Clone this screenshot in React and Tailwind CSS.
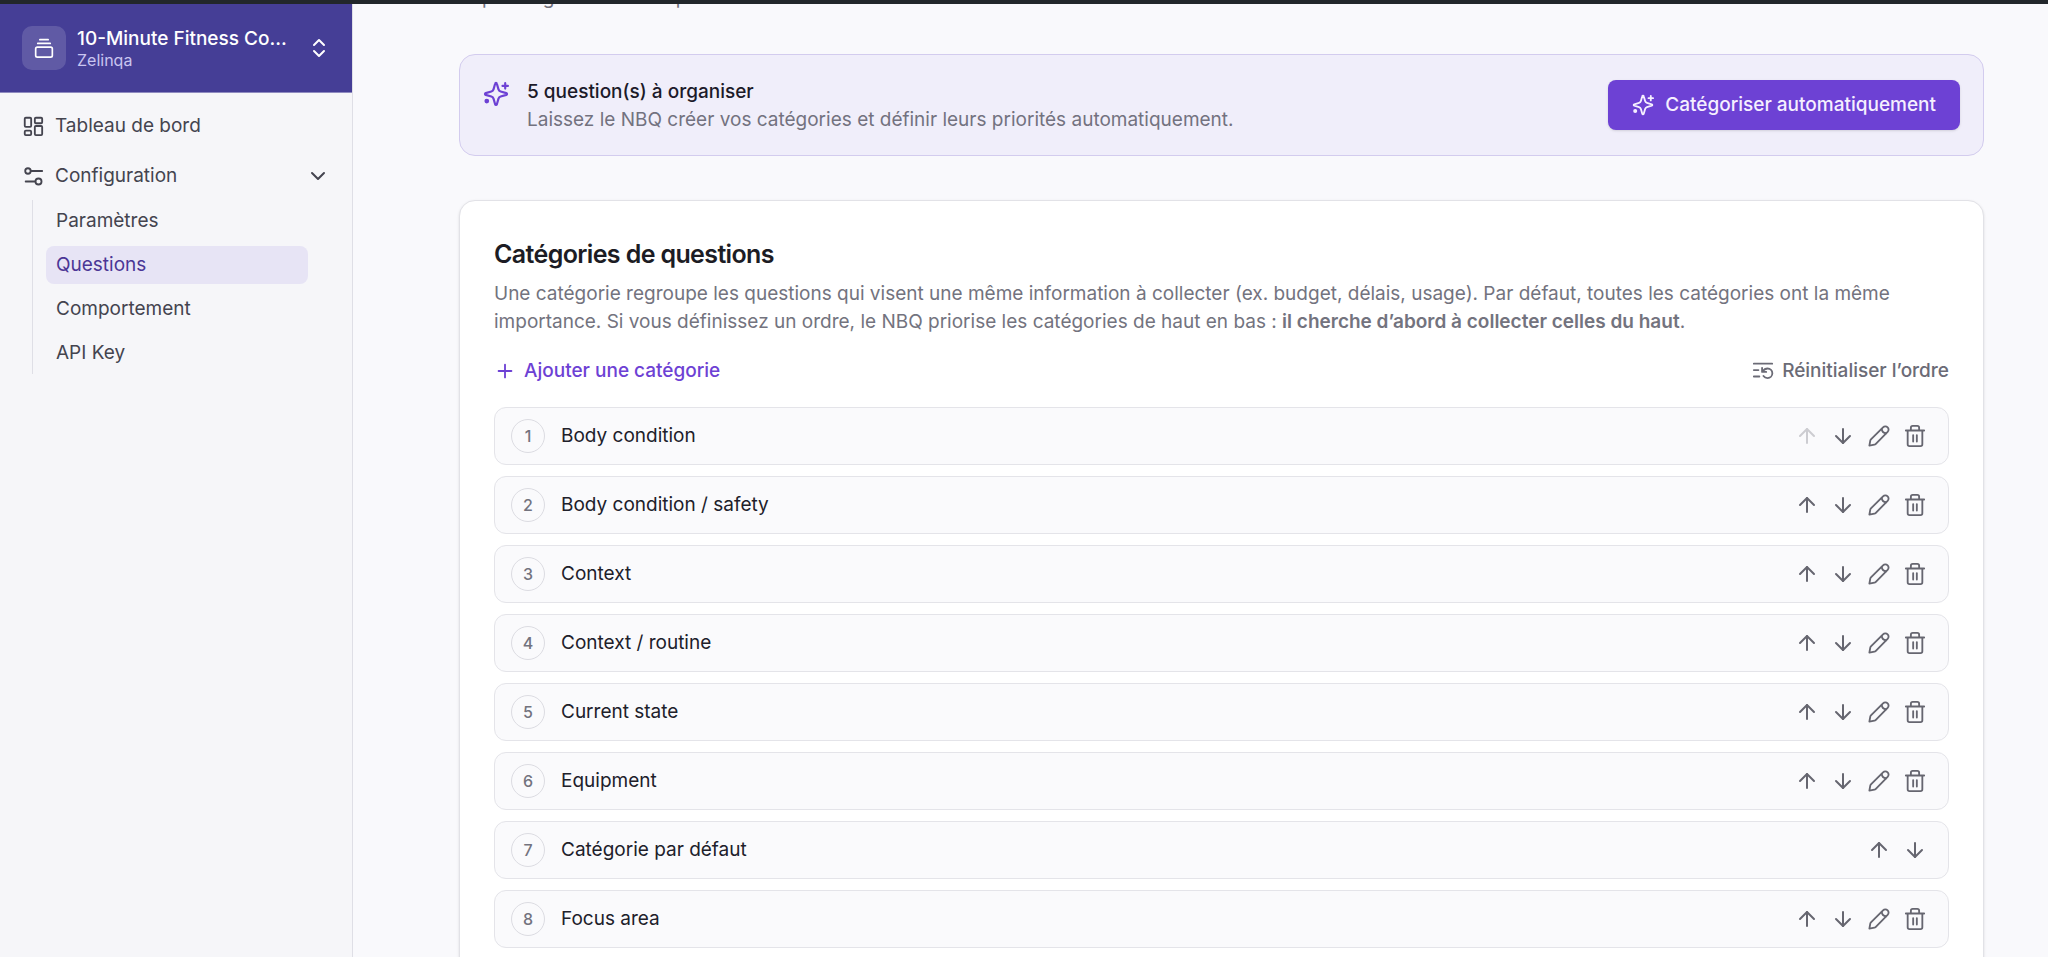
import { Plus, ArrowUp, ArrowDown, ChevronDown, ChevronsUpDown } from "lucide-react";

function Icon({ className, children, strokeWidth = 1.5 }) {
  return (
    <svg viewBox="0 0 24 24" fill="none" stroke="currentColor" strokeWidth={strokeWidth} strokeLinecap="round" strokeLinejoin="round" className={className} aria-hidden="true">
      {children}
    </svg>
  );
}

function StackIcon({ className }) {
  return (
    <Icon className={className} strokeWidth={2}>
      <rect x="2" y="11" width="20" height="12" rx="2" />
      <path d="M4.5 6.5h15M7 2h10" />
    </Icon>
  );
}

function DashboardIcon({ className }) {
  return (
    <Icon className={className} strokeWidth={2}>
      <rect x="3" y="3" width="7" height="10" rx="1.2" />
      <rect x="14" y="3" width="8" height="6" rx="1.2" />
      <rect x="3" y="17" width="7" height="5" rx="1.2" />
      <rect x="14" y="12" width="8" height="10" rx="1.2" />
    </Icon>
  );
}

function SlidersIcon({ className }) {
  return (
    <Icon className={className} strokeWidth={2}>
      <circle cx="6.5" cy="6.5" r="3" />
      <path d="M9.5 6.5h12.5M4 18h10.5" />
      <circle cx="18" cy="18" r="3.3" />
    </Icon>
  );
}

function SparklesIcon({ className }) {
  return (
    <Icon className={className} strokeWidth={2}>
      <path d="M12 1.8c.5 0 .7.3.8.7l1.5 5.2c.3 1 1 1.700 2 2l5.200 1.500c.9.3.9 1.300 0 1.600l-5.200 1.500c-1 .3-1.700 1-2 2l-1.500 5.200c-.3.9-1.300.9-1.600 0l-1.500-5.200c-.3-1-1-1.700-2-2l-5.200-1.500c-.9-.3-.9-1.300 0-1.600l5.200-1.500c1-.3 1.700-1 2-2l1.500-5.200c.1-.4.3-.7.800-.7z" />
      <path d="M20.5 2v5M18 4.500h5" />
      <circle cx="3.5" cy="18.5" r="1.2" fill="currentColor" />
    </Icon>
  );
}

function PencilIcon({ className }) {
  return (
    <Icon className={className} strokeWidth={2}>
      <path d="M1.5 22.500l1-5.500c.1-.5.3-.9.7-1.300L16.400 2.500a3.500 3.500 0 0 1 5 0 3.500 3.500 0 0 1 0 5L8.300 20.800c-.4.4-.8.6-1.300.7z" />
      <path d="M15 4.200c.2 3 1.800 4.600 4.800 4.800" />
    </Icon>
  );
}

function TrashIcon({ className }) {
  return (
    <Icon className={className} strokeWidth={2}>
      <path d="M2 6h20M4 6v15A2 2 0 0 0 6 23h12a2 2 0 0 0 2-2V6M7.5 6V3a2 2 0 0 1 2-2h5a2 2 0 0 1 2 2V6M10 11v7M14 11v7" />
    </Icon>
  );
}

function ResetOrderIcon({ className }) {
  return (
    <Icon className={className} strokeWidth={2}>
      <path d="M2 4h20M2 11h5M2 18h6" />
      <path d="M11 8.500v4.500h4.500M11.500 12.500c1.500-2.200 3.500-3.200 5.500-3.200a5.200 5.200 0 0 1 0 10.400c-2 0-3.500-.8-4.500-2.200" />
    </Icon>
  );
}

const subItems = [
  { label: "Paramètres" },
  { label: "Questions", active: true },
  { label: "Comportement" },
  { label: "API Key" },
];

const categories = [
  { name: "Body condition", first: true },
  { name: "Body condition / safety" },
  { name: "Context" },
  { name: "Context / routine" },
  { name: "Current state" },
  { name: "Equipment" },
  { name: "Catégorie par défaut", locked: true },
  { name: "Focus area" },
];

function IconButton({ label, disabled, children }) {
  return (
    <button type="button" aria-label={label} disabled={disabled} className="flex size-8 items-center justify-center rounded-md disabled:opacity-30">
      {children}
    </button>
  );
}

function Sidebar() {
  return (
    <aside className="flex w-[353px] shrink-0 flex-col border-r border-[#dfdfe6] bg-[#f6f6f9]">
      <button type="button" className="flex h-[89px] items-center gap-[11px] border-b border-[#8f8bc0] bg-[#453e96] pr-[21px] pl-[22px] text-left text-white">
        <span className="flex size-11 shrink-0 items-center justify-center rounded-[10px] bg-white/15">
          <StackIcon className="size-5" />
        </span>
        <span className="flex min-w-0 flex-1 flex-col pt-[2px]">
          <span className="truncate text-[19px] leading-[22px] font-medium">10-Minute Fitness Coach</span>
          <span className="text-[16px] leading-5 text-[#c9c5f0]">Zelinqa</span>
        </span>
        <ChevronsUpDown className="size-6 shrink-0" strokeWidth={2} aria-hidden="true" />
      </button>
      <nav className="flex flex-col px-[22px] pt-[9px] text-[19px] text-[#44444f]">
        <a href="#tableau" className="flex h-12 items-center gap-[11px]">
          <DashboardIcon className="size-[22px]" />
          Tableau de bord
        </a>
        <button type="button" aria-expanded="true" className="mt-0.5 flex h-12 items-center gap-[11px]">
          <SlidersIcon className="size-[22px]" />
          <span className="flex-1 text-left">Configuration</span>
          <ChevronDown className="size-6" strokeWidth={2} aria-hidden="true" />
        </button>
        <ul className="ml-[10px] flex flex-col gap-[6px] border-l border-[#dfdfe6] py-[2px] pr-[22px] pl-[13px]">
          {subItems.map((item) => (
            <li key={item.label}>
              <a
                href="#section"
                aria-current={item.active ? "page" : undefined}
                className={item.active ? "flex h-[38px] items-center rounded-lg bg-[#e7e4f5] px-[10px] text-[#4b3696]" : "flex h-[38px] items-center rounded-lg px-[10px]"}
              >
                {item.label}
              </a>
            </li>
          ))}
        </ul>
      </nav>
    </aside>
  );
}

function CategoryRow({ index, category }) {
  return (
    <li className="flex h-[58px] items-center gap-4 rounded-xl border border-[#e4e4e9] bg-[#fafafc] pr-[17px] pl-4">
      <span className="flex size-[34px] items-center justify-center rounded-full border border-[#dcdce2] text-[16px] font-medium text-[#73737e]">{index}</span>
      <span className="flex-1 text-[19px] text-[#20202a]">{category.name}</span>
      <div className="flex items-center gap-1 text-[#666670]">
        <IconButton label="Monter" disabled={category.first}>
          <ArrowUp className="size-6" strokeWidth={2} />
        </IconButton>
        <IconButton label="Descendre">
          <ArrowDown className="size-6" strokeWidth={2} />
        </IconButton>
        {!category.locked && (
          <>
            <IconButton label="Modifier">
              <PencilIcon className="size-[22px]" />
            </IconButton>
            <IconButton label="Supprimer">
              <TrashIcon className="size-[22px]" />
            </IconButton>
          </>
        )}
      </div>
    </li>
  );
}

export default function App() {
  return (
    <div className="flex h-screen flex-col overflow-hidden border-t-4 border-[#22272b] bg-[#f9f9fc] font-['Inter',sans-serif]">
      <div className="flex min-h-0 flex-1">
        <Sidebar />
        <main className="flex min-w-0 flex-1 flex-col overflow-hidden pr-16 pl-[106px]">
          <div className="flex h-[50px] shrink-0 flex-col justify-start">
            <p className="-mt-[20px] text-[19px] leading-7 text-[#6f6f7a]">Réponse générée selon priorité</p>
          </div>
          <section className="flex shrink-0 items-center gap-[18px] rounded-2xl border border-[#d3ccee] bg-[#f0eefa] px-[23px] py-[21px]">
            <SparklesIcon className="mt-[5px] size-[26px] self-start text-[#6d41d4]" />
            <div className="flex-1 pt-[2px] text-[19px] leading-7">
              <h2 className="font-medium text-[#1c1a29]">5 question(s) à organiser</h2>
              <p className="text-[#73727f]">Laissez le NBQ créer vos catégories et définir leurs priorités automatiquement.</p>
            </div>
            <button type="button" className="flex h-[50px] items-center gap-[11px] rounded-lg bg-[#6d41d4] px-6 text-[19px] font-medium text-[#f5efff] shadow-sm">
              <SparklesIcon className="size-[22px]" />
              Catégoriser automatiquement
            </button>
          </section>
          <section className="mt-11 shrink-0 rounded-2xl border border-[#e2e2e7] bg-white px-[34px] pt-[35px] pb-9 shadow">
            <h2 className="text-[25px] leading-9 font-semibold tracking-tight text-[#1c1c24]">Catégories de questions</h2>
            <p className="mt-2 text-[19px] leading-7 text-[#73737e]">
              Une catégorie regroupe les questions qui visent une même information à collecter (ex. budget, délais, usage). Par défaut, toutes les catégories ont la même importance. Si vous définissez un ordre, le NBQ priorise les catégories de haut en bas :{" "}
              <strong className="font-semibold">il cherche d’abord à collecter celles du haut</strong>.
            </p>
            <div className="mt-[15px] flex items-center justify-between text-[19px] leading-10 font-medium">
              <button type="button" className="flex items-center gap-2 text-[#6d41d4]">
                <Plus className="size-[22px]" strokeWidth={2} aria-hidden="true" />
                Ajouter une catégorie
              </button>
              <button type="button" className="flex items-center gap-2 text-[#6b6b76]">
                <ResetOrderIcon className="size-[22px]" />
                Réinitialiser l’ordre
              </button>
            </div>
            <ol className="mt-4 flex flex-col gap-[11px]">
              {categories.map((category, i) => (
                <CategoryRow key={category.name} index={i + 1} category={category} />
              ))}
            </ol>
          </section>
        </main>
      </div>
    </div>
  );
}
